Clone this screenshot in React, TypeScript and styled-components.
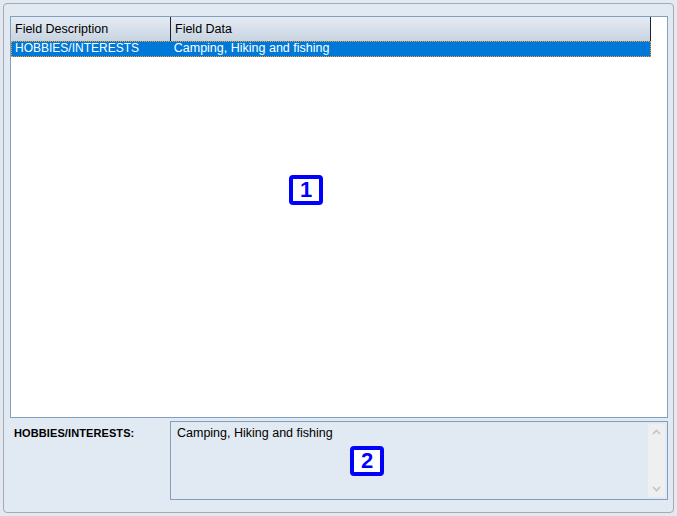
import React from "react";
import styled, { createGlobalStyle } from "styled-components";

const Global = createGlobalStyle`
  html, body { margin: 0; padding: 0; background: #e3e9f1; }
  body { font-family: "Liberation Sans", Arial, sans-serif; font-size: 12px; color: #000; }
  * { box-sizing: border-box; }
`;

const Page = styled.div`
  width: 677px;
  height: 516px;
  padding: 3px 3px 3px 3px;
  background: #e3e9f1;
`;

const Panel = styled.div`
  width: 671px;
  height: 510px;
  border: 1px solid #a7a9ac;
  border-radius: 4px;
  background: #e1e9f3;
  padding: 12px 5px 0 6px;
  display: flex;
  flex-direction: column;
  gap: 3px;
`;

const Grid = styled.div`
  position: relative;
  height: 402px;
  border: 1px solid #849fbd;
  background: #fff;
  display: flex;
  flex-direction: column;
`;

const HeaderRow = styled.div`
  display: flex;
  height: 24px;
  width: 640px;
`;

const HeaderCell = styled.div<{ $w: number }>`
  width: ${(p) => p.$w}px;
  height: 24px;
  background: linear-gradient(#e5ebf3, #c8d4e2);
  border-right: 1px solid #1b2230;
  padding: 5px 0 0 4px;
  font-size: 12.5px;
  color: #000;
  white-space: nowrap;
`;

const Row = styled.div`
  display: flex;
  width: 640px;
  height: 16px;
  background: #0078d7;
  border: 1px dotted #ff9a1f;
  color: #fff;
`;

const Cell = styled.div<{ $w: number; $size: number }>`
  width: ${(p) => p.$w}px;
  padding: 0 0 0 3px;
  line-height: 13px;
  font-size: ${(p) => p.$size}px;
  white-space: nowrap;
`;

const Badge = styled.div<{ $top: number; $left: number }>`
  position: absolute;
  top: ${(p) => p.$top}px;
  left: ${(p) => p.$left}px;
  width: 34px;
  height: 30px;
  border: 4px solid #0000ff;
  border-radius: 4px;
  background: #fff;
  color: #0000ff;
  font-family: "Liberation Sans", Arial, sans-serif;
  font-weight: bold;
  font-size: 22px;
  line-height: 22px;
  text-align: center;
`;

const Bottom = styled.div`
  display: flex;
  height: 79px;
`;

const Label = styled.div`
  width: 160px;
  padding: 6px 0 0 4px;
  font-weight: bold;
  font-size: 11px;
  letter-spacing: 0.1px;
  white-space: nowrap;
`;

const TextBox = styled.div`
  position: relative;
  flex: 1;
  border: 1px solid #849fbd;
  background: #e1e9f3;
  display: flex;
`;

const TextContent = styled.div`
  flex: 1;
  padding: 4px 0 0 6px;
  font-size: 12.5px;
`;

const ScrollBar = styled.div`
  width: 17px;
  margin: 2px 2px 2px 0;
  background: #efefef;
  display: flex;
  flex-direction: column;
  justify-content: space-between;
  align-items: center;
  padding: 5px 0 5px;
`;

const Arrow = ({ up }: { up?: boolean }) => (
  <svg width="9" height="6" viewBox="0 0 9 6">
    <path
      d={up ? "M1 5 L4.5 1.5 L8 5" : "M1 1 L4.5 4.5 L8 1"}
      stroke="#c4c4c4"
      strokeWidth="1.6"
      fill="none"
    />
  </svg>
);

export default function App() {
  return (
    <Page>
      <Global />
      <Panel>
        <Grid>
          <HeaderRow>
            <HeaderCell $w={160}>Field Description</HeaderCell>
            <HeaderCell $w={480}>Field Data</HeaderCell>
          </HeaderRow>
          <Row>
            <Cell $w={159} $size={12}>HOBBIES/INTERESTS</Cell>
            <Cell $w={480} $size={12.5}>Camping, Hiking and fishing</Cell>
          </Row>
          <Badge $top={158} $left={278}>1</Badge>
        </Grid>
        <Bottom>
          <Label>HOBBIES/INTERESTS:</Label>
          <TextBox>
            <TextContent>Camping, Hiking and fishing</TextContent>
            <ScrollBar>
              <Arrow up />
              <Arrow />
            </ScrollBar>
            <Badge $top={24} $left={179}>2</Badge>
          </TextBox>
        </Bottom>
      </Panel>
    </Page>
  );
}
